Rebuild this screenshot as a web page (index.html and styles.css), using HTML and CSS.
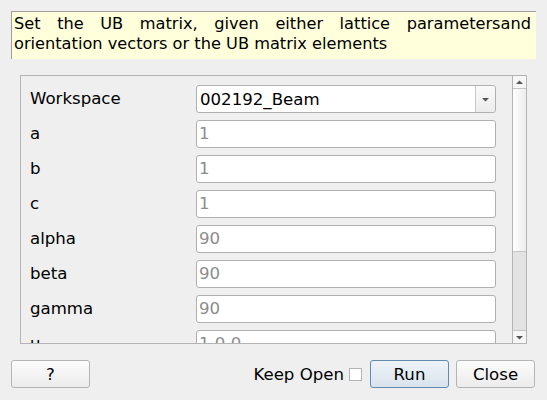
FILE: index.html
```html
<!DOCTYPE html>
<html>
<head>
<meta charset="utf-8">
<link rel="stylesheet" href="styles.css">
</head>
<body>
<div class="desc">Set the UB matrix, given either lattice parametersand orientation vectors or the UB matrix elements</div>
<div class="frame">
  <div class="viewport">
    <div class="form">
      <div class="label">Workspace</div>
      <div class="combo"><span class="combo-text">002192_Beam</span><span class="combo-btn"><svg width="9" height="5" viewBox="0 0 9 5"><path d="M1 1h7L4.5 4.5z" fill="#555"/></svg></span></div>
      <div class="label">a</div><div class="edit">1</div>
      <div class="label">b</div><div class="edit">1</div>
      <div class="label">c</div><div class="edit">1</div>
      <div class="label">alpha</div><div class="edit">90</div>
      <div class="label">beta</div><div class="edit">90</div>
      <div class="label">gamma</div><div class="edit">90</div>
      <div class="label">u</div><div class="edit">1,0,0</div>
    </div>
  </div>
  <div class="scrollbar">
    <div class="arrow up"><svg width="9" height="5" viewBox="0 0 9 5"><path d="M1 4h7L4.5 0.5z" fill="#555"/></svg></div>
    <div class="slider"></div>
    <div class="trough"></div>
    <div class="arrow down"><svg width="9" height="5" viewBox="0 0 9 5"><path d="M1 1h7L4.5 4.5z" fill="#555"/></svg></div>
  </div>
</div>
<div class="buttons">
  <button class="btn help">?</button>
  <div class="spacer"></div>
  <label class="keep">Keep Open <span class="check"></span></label>
  <button class="btn run">Run</button>
  <button class="btn close">Close</button>
</div>
</body>
</html>
```

FILE: styles.css
```css
* { box-sizing: border-box; }
html, body { margin: 0; padding: 0; }
body {
  width: 547px;
  height: 400px;
  background: #efefef;
  font-family: "DejaVu Sans", sans-serif;
  font-size: 16.6px;
  color: #000;
  overflow: hidden;
}
.desc {
  margin: 11px 0 0 11px;
  width: 525px;
  height: 48px;
  background: #ffffdc;
  border-top: 1px solid #a0a0a0;
  border-left: 1px solid #a0a0a0;
  padding: 2px 5px 0 2px;
  text-align: justify;
  line-height: 20px;
  font-size: 16.2px;
}
.frame {
  margin: 16px 0 0 20px;
  width: 507px;
  height: 269px;
  border: 1px solid #b4b4b4;
  display: flex;
}
.viewport {
  flex: 1;
  overflow: hidden;
}
.form {
  display: grid;
  grid-template-columns: 166px 300px;
  grid-auto-rows: 28px;
  row-gap: 7px;
  padding: 9px 0 0 9px;
  align-items: center;
}
.label {
  line-height: 28px;
}
.combo {
  height: 28px;
  border: 1px solid #b0b0b0;
  border-radius: 3px;
  background: #fff;
  display: flex;
  align-items: center;
}
.combo-text {
  flex: 1;
  padding-left: 3px;
}
.combo-btn {
  width: 20px;
  height: 100%;
  border-left: 1px solid #c8c8c8;
  background: linear-gradient(#fafafa, #ececec);
  border-radius: 0 3px 3px 0;
  display: flex;
  align-items: center;
  justify-content: center;
}
.edit {
  height: 28px;
  border: 1px solid #b0b0b0;
  border-radius: 3px;
  background: #fff;
  color: #8c8c8c;
  padding-left: 2px;
  line-height: 26px;
}
.scrollbar {
  width: 14px;
  border-left: 1px solid #b4b4b4;
  display: flex;
  flex-direction: column;
  background: #e4e4e4;
}
.arrow {
  height: 13px;
  background: #f6f6f6;
  display: flex;
  align-items: center;
  justify-content: center;
}
.arrow.up { border-bottom: 1px solid #c4c4c4; }
.arrow.down { border-top: 1px solid #c4c4c4; }
.slider {
  height: 163px;
  background: linear-gradient(90deg, #ffffff, #ececec);
  border-bottom: 1px solid #c4c4c4;
}
.trough { flex: 1; background: #e3e3e3; }
.buttons {
  display: flex;
  align-items: center;
  margin: 16px 12px 0 11px;
  height: 28px;
}
.spacer { flex: 1; }
.btn {
  font-family: "DejaVu Sans", sans-serif;
  font-size: 16.6px;
  color: #000;
  width: 79px;
  height: 28px;
  border: 1px solid #b4b4b4;
  border-radius: 3px;
  background: linear-gradient(#fbfbfb, #ececec);
  padding: 0;
}
.run {
  margin-left: 8px;
  border-color: #5f8ab3;
  background: linear-gradient(#eef3f8, #d9e3ed);
}
.close { margin-left: 7px; }
.keep {
  display: flex;
  align-items: center;
}
.check {
  width: 13px;
  height: 13px;
  border: 1px solid #b4b4b4;
  background: #fff;
  margin-left: 5px;
}
```
